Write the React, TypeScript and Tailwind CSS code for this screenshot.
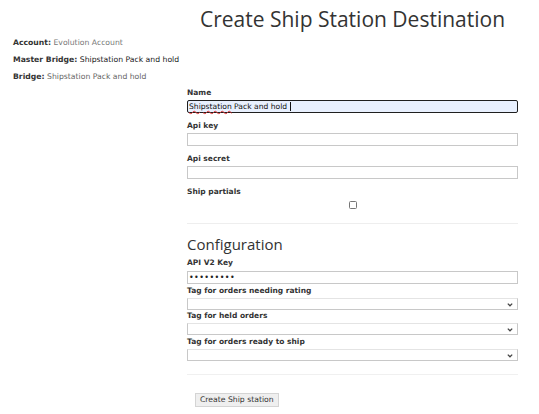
import React from "react";

const labelCls = "block h-[10px] leading-[10px] text-[7.5px] font-bold text-[#333]";
const inputCls = "block w-full h-[13px] border border-[#c8c8c8] bg-white";

const Chevron: React.FC = () => (
  <svg width="6" height="4" viewBox="0 0 6 4" className="absolute right-[4px] top-[4px]">
    <path d="M0.8 0.6 L3 2.8 L5.2 0.6" fill="none" stroke="#444" strokeWidth="1.3" />
  </svg>
);

const SelectBox: React.FC = () => (
  <div className="relative h-[12px] w-full border border-[#c8c8c8] border-t-[#e4e4e4] bg-white">
    <Chevron />
  </div>
);

const App: React.FC = () => {
  return (
    <div
      className="flex w-[539px] h-[414px] bg-white text-[#333]"
      style={{ fontFamily: '"DejaVu Sans", Verdana, sans-serif' }}
    >
      {/* left info column */}
      <div className="w-[187px] pl-[13px] pt-[38px] flex flex-col gap-[7px] text-[7.7px] leading-[10px]">
        <div>
          <span className="font-bold text-[#333]">Account:</span>{" "}
          <span className="text-[#777]">Evolution Account</span>
        </div>
        <div>
          <span className="font-bold text-[#333]">Master Bridge:</span>{" "}
          <span className="text-[#222]">Shipstation Pack and hold</span>
        </div>
        <div>
          <span className="font-bold text-[#333]">Bridge:</span>{" "}
          <span className="text-[#666]">Shipstation Pack and hold</span>
        </div>
      </div>

      {/* form column */}
      <div className="w-[331px] flex flex-col">
        <h1
          className="mt-[5px] h-[28px] leading-[28px] text-center text-[21px] text-[#333]"
          style={{ fontFamily: '"Open Sans", sans-serif' }}
        >
          Create Ship Station Destination
        </h1>

        <div className="mt-[55px]">
          <label className={labelCls}>Name</label>
          <div className="mt-[2px] h-[13px] w-full rounded-[2px] border-[1.5px] border-[#1f1f1f] bg-[#e8f0fe] px-[1px] text-[7.6px] leading-[10px] text-[#111] flex items-center">
            <span className="underline decoration-wavy decoration-[#d33] decoration-[1px] underline-offset-[1px]">
              Shipstation
            </span>
            <span>&nbsp;Pack and hold&nbsp;</span>
            <span className="inline-block w-[1px] h-[9px] bg-[#111]" />
          </div>
        </div>

        <div className="mt-[8px]">
          <label className={labelCls}>Api key</label>
          <div className={`mt-[2px] ${inputCls}`} />
        </div>

        <div className="mt-[8px]">
          <label className={labelCls}>Api secret</label>
          <div className={`mt-[2px] ${inputCls}`} />
        </div>

        <div className="mt-[8px]">
          <label className={labelCls}>Ship partials</label>
          <div className="mt-[4px] flex justify-center">
            <div className="w-[8px] h-[8px] rounded-[1.5px] border border-[#767676] bg-white" />
          </div>
        </div>

        <hr className="mt-[14px] border-0 border-t border-[#eee]" />

        <h2
          className="mt-[10px] h-[20px] leading-[20px] text-[15px] text-[#333]"
          style={{ fontFamily: '"Open Sans", sans-serif' }}
        >
          Configuration
        </h2>

        <label className={`mt-[4px] ${labelCls}`}>API V2 Key</label>
        <div className={`mt-[3px] ${inputCls} px-[1px] text-[8px] leading-[11px] tracking-[0.4px] text-[#222]`}>
          •••••••••
        </div>

        <label className={`mt-[2px] ${labelCls}`}>Tag for orders needing rating</label>
        <div className="mt-[2px]">
          <SelectBox />
        </div>

        <label className={`mt-[1px] ${labelCls}`}>Tag for held orders</label>
        <div className="mt-[2px]">
          <SelectBox />
        </div>

        <label className={`mt-[2px] ${labelCls}`}>Tag for orders ready to ship</label>
        <div className="mt-[2px]">
          <SelectBox />
        </div>

        <hr className="mt-[13px] border-0 border-t border-[#f0f0f0]" />

        <div className="mt-[10px] pl-[8px]">
          <button className="h-[14px] px-[4px] border border-[#d4d4d4] bg-[#efefef] text-[7.7px] leading-[12px] text-[#333]">
            Create Ship station
          </button>
        </div>
      </div>
    </div>
  );
};

export default App;
